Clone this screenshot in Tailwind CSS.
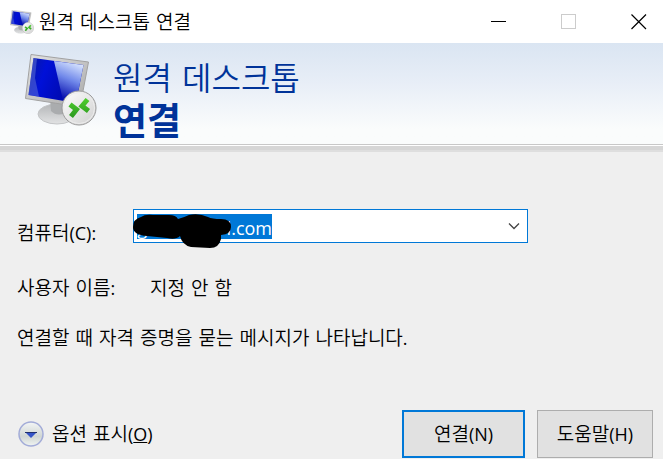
<!DOCTYPE html>
<html lang="ko">
  <head>
    <meta charset="UTF-8" />
    <meta name="viewport" content="width=device-width, initial-scale=1.0" />
    <title>원격 데스크톱 연결</title>
    <script src="https://cdn.jsdelivr.net/npm/@tailwindcss/browser@4"></script>
  </head>
  <body class="min-h-screen flex flex-col bg-[#efefef] text-black text-[19px] leading-7 font-[350] font-['DejaVu_Sans','Noto_Sans_CJK_KR',sans-serif]">
    <!-- Monitor icon, shared by the title bar and the banner -->
    <svg class="absolute size-0">
      <defs>
        <linearGradient id="screen" x1="0" y1="0" x2="1" y2="0.3">
          <stop offset="0" stop-color="#0a1a9c" />
          <stop offset="0.35" stop-color="#0010d8" />
          <stop offset="1" stop-color="#0008a0" />
        </linearGradient>
        <linearGradient id="glare" x1="0.7" y1="0" x2="0.4" y2="1">
          <stop offset="0" stop-color="#dce8ff" />
          <stop offset="0.45" stop-color="#7088ea" />
          <stop offset="0.9" stop-color="#0c14b0" />
        </linearGradient>
        <linearGradient id="frame" x1="0" y1="0" x2="1" y2="1">
          <stop offset="0" stop-color="#e4e4e4" />
          <stop offset="1" stop-color="#a8a8a8" />
        </linearGradient>
        <linearGradient id="stand" x1="0" y1="0" x2="0" y2="1">
          <stop offset="0" stop-color="#b4b6b8" />
          <stop offset="1" stop-color="#e2e3e4" />
        </linearGradient>
        <linearGradient id="badge" x1="0" y1="0" x2="1" y2="1">
          <stop offset="0" stop-color="#ffffff" />
          <stop offset="1" stop-color="#cfcfcf" />
        </linearGradient>
        <linearGradient id="arrows" x1="0" y1="0" x2="0" y2="1">
          <stop offset="0" stop-color="#4ccb2c" />
          <stop offset="1" stop-color="#2f9c22" />
        </linearGradient>
      </defs>
      <symbol id="monitor" viewBox="0 0 72 72">
        <ellipse cx="32" cy="60" rx="19" ry="10" fill="url(#stand)" stroke="#c3c5c7" />
        <path d="M25 44 41 47 40 59Q32 63 26 57Z" fill="#aaacae" />
        <path d="M6 0.500 63.500 8 55 53 0.500 44.500Z" fill="url(#frame)" stroke="#a2a2a2" />
        <path d="M8.500 4 58.500 11 51 49 3.500 41Z" fill="url(#screen)" />
        <path d="M29 7 58.500 11 51 49 38 46.500Z" fill="url(#glare)" />
        <path d="M8.500 4 12 4.500 10 24 14 42.500 3.500 41Z" fill="#6275d8" opacity="0.5" />
        <circle cx="54" cy="54" r="17" fill="url(#badge)" stroke="#9a9a9a" />
        <circle cx="54" cy="54" r="15.500" fill="none" stroke="#ececec" />
        <path d="M45 50.500 51.500 55.500 46 62.500M62.500 45.500 57 52 63.500 57" fill="none" stroke="url(#arrows)" stroke-width="5" />
      </symbol>
    </svg>

    <!-- Title bar -->
    <header class="flex items-center h-[43px] pl-2.5 pr-4 bg-white">
      <svg class="w-6 h-6 mr-[5px]"><use href="#monitor" /></svg>
      <span class="flex-1">원격 데스크톱 연결</span>
      <div class="flex items-center gap-[54px]">
        <button type="button" aria-label="최소화">
          <svg class="block size-4" viewBox="0 0 16 16" shape-rendering="crispEdges"><path d="M0 7.500H15" stroke="#000" /></svg>
        </button>
        <button type="button" aria-label="최대화" disabled>
          <svg class="block size-4" viewBox="0 0 16 16" shape-rendering="crispEdges"><path d="M0.500 0.500H14.500V14.500H0.500Z" fill="none" stroke="#ccc" /></svg>
        </button>
        <button type="button" aria-label="닫기">
          <svg class="block size-4" viewBox="0 0 16 16"><path d="M0.500 0.500 15 15M15 0.500 0.500 15" stroke="#000" stroke-width="1.200" /></svg>
        </button>
      </div>
    </header>

    <!-- Banner -->
    <div class="flex gap-4 h-[101px] pl-[25px] pt-[11px] bg-linear-to-b from-[#dae5f2] via-[#e8eef7] via-40% to-[#fafcfc] to-85%">
      <svg class="size-[72px]"><use href="#monitor" /></svg>
      <h1 class="pt-[3px] text-[#003399]">
        <span class="block text-[32px] leading-[44px]">원격 데스크톱</span>
        <span class="block text-[37px] leading-[44px] font-bold">연결</span>
      </h1>
    </div>
    <div class="h-2 bg-[#d6d6d6] border-t border-[#c8c8c8] border-b-2 border-b-[#dedede] shadow-[inset_0_1px_0_#fff]"></div>

    <form class="flex-1 flex flex-col px-[17px] pt-[57px]">
      <div class="flex items-start">
        <label for="computer" class="w-29 pt-2.5">컴퓨터<span class="font-['Open_Sans',sans-serif] text-lg font-normal">(C):</span></label>
        <div class="relative flex items-center justify-between w-[395px] h-[34px] px-[3px] bg-white border border-[#0078d7]">
          <input id="computer" type="text" value="g                 l.com" class="w-[135px] h-[25px] pt-1 bg-[#0078d7] text-white text-lg leading-5 font-normal text-right outline-none font-['Open_Sans','Noto_Sans_CJK_KR',sans-serif]" />
          <button type="button" aria-label="목록 열기" class="px-1">
            <svg class="block w-3 h-2" viewBox="0 0 12 8"><path d="M1 1.500 6 6.500 11 1.500" fill="none" stroke="#444" stroke-width="1.300" /></svg>
          </button>
          <!-- Marker scribble over the host name -->
          <svg class="absolute -left-px top-1 w-[99px] h-9" viewBox="0 0 99 36">
            <path d="M0 13Q0 5 8 3Q12 0 20 1H36Q43 1 45 5Q52 3 56 1Q66-1 75 3Q79 5 88 5Q98 5 98 13Q98 20 88 21V25Q86 34 77 34L58 33Q49 31 47 22Q43 26 34 24L14 22Q0 21 0 13Z" fill="#000" />
          </svg>
        </div>
      </div>

      <dl class="flex mt-[27px]">
        <dt class="w-[133px]">사용자 이름<span class="font-['Open_Sans',sans-serif] text-lg font-normal">:</span></dt>
        <dd>지정 안 함</dd>
      </dl>
      <p class="mt-[22px]">연결할 때 자격 증명을 묻는 메시지가 나타납니다<span class="font-['Open_Sans',sans-serif] text-lg font-normal">.</span></p>
    </form>

    <footer class="flex items-center gap-3 pl-[18px] pr-2.5 pb-px">
      <button type="button" class="flex items-center gap-2 mr-auto">
        <svg class="size-[26px]" viewBox="0 0 26 26">
          <defs>
            <linearGradient id="knob" x1="0" y1="0" x2="0" y2="1">
              <stop offset="0" stop-color="#f4f6f6" />
              <stop offset="0.6" stop-color="#d0d6d4" />
              <stop offset="1" stop-color="#f0f4f2" />
            </linearGradient>
          </defs>
          <circle cx="13" cy="13" r="12" fill="url(#knob)" stroke="#a3acd8" stroke-width="1.500" />
          <path d="M7 11H19L13 17Z" fill="#3454c8" />
          <path d="M7 11.500H19" stroke="#20306c" />
        </svg>
        <span>옵션 표시<span class="font-['Open_Sans',sans-serif] text-lg font-normal">(<u>O</u>)</span></span>
      </button>
      <button type="submit" class="w-[123px] h-12 bg-[#e1e1e1] border-2 border-[#0078d7]">연결<span class="font-['Open_Sans',sans-serif] text-lg font-normal">(N)</span></button>
      <button type="button" class="w-[116px] h-12 bg-[#e1e1e1] border border-[#adadad]">도움말<span class="font-['Open_Sans',sans-serif] text-lg font-normal">(H)</span></button>
    </footer>
  </body>
</html>
